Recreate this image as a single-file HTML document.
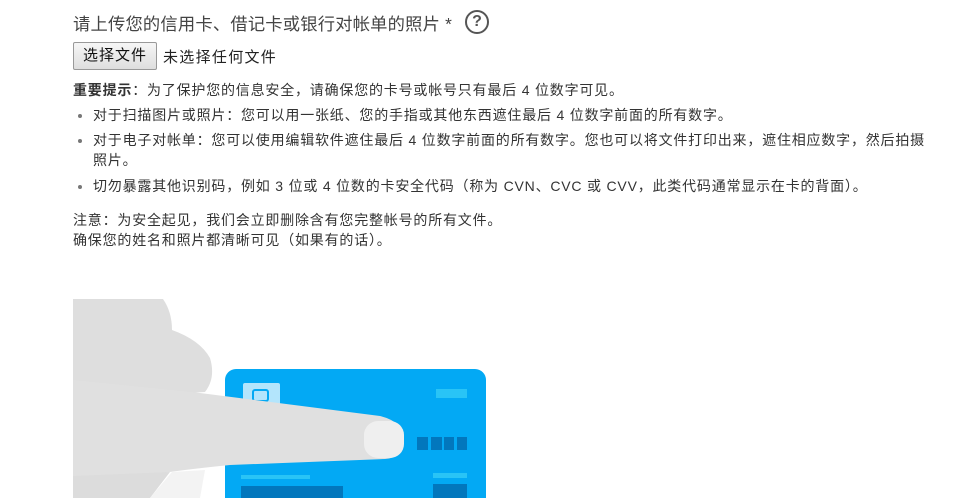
<!DOCTYPE html>
<html><head><meta charset="utf-8"><style>
html,body{margin:0;width:960px;height:498px;overflow:hidden;}
body{background:#fff;font-family:"Liberation Sans","Noto Sans CJK SC",sans-serif;color:#333;position:relative;}
.t{position:absolute;left:73px;top:10px;font-size:17.3px;color:#444;white-space:nowrap;letter-spacing:0.2px;}
.q{position:absolute;left:465px;top:10px;width:24px;height:24px;border:2.5px solid #555;border-radius:50%;box-sizing:border-box;font:bold 16px "Liberation Sans",sans-serif;color:#555;text-align:center;line-height:19px;}
.btn{position:absolute;left:73px;top:42px;width:84px;height:28px;box-sizing:border-box;border:1px solid #999;border-radius:2px;background:linear-gradient(#f6f6f6,#dedede);font-size:15px;color:#111;text-align:center;line-height:26px;letter-spacing:1px;}
.nf{position:absolute;left:163px;top:46px;font-size:15px;color:#222;letter-spacing:1.3px;}
.p,.b{position:absolute;font-size:14px;line-height:20px;white-space:nowrap;letter-spacing:0.8px;}
.p{left:73px}.b{left:93px}
.d{position:absolute;left:78px;width:4px;height:4px;border-radius:50%;background:#777;}
</style></head><body>
<div class="t">请上传您的信用卡、借记卡或银行对帐单的照片 *</div>
<div class="q">?</div>
<div class="btn">选择文件</div>
<div class="nf">未选择任何文件</div>
<div class="p" style="top:80px"><b>重要提示</b>：为了保护您的信息安全，请确保您的卡号或帐号只有最后 4 位数字可见。</div>
<div class="d" style="top:114px"></div>
<div class="b" style="top:105px">对于扫描图片或照片：您可以用一张纸、您的手指或其他东西遮住最后 4 位数字前面的所有数字。</div>
<div class="d" style="top:139px"></div>
<div class="b" style="top:130px">对于电子对帐单：您可以使用编辑软件遮住最后 4 位数字前面的所有数字。您也可以将文件打印出来，遮住相应数字，然后拍摄<br>照片。</div>
<div class="d" style="top:185px"></div>
<div class="b" style="top:176px">切勿暴露其他识别码，例如 3 位或 4 位数的卡安全代码（称为 CVN、CVC 或 CVV，此类代码通常显示在卡的背面）。</div>
<div class="p" style="top:210px">注意：为安全起见，我们会立即删除含有您完整帐号的所有文件。</div>
<div class="p" style="top:230px">确保您的姓名和照片都清晰可见（如果有的话）。</div>
<svg style="position:absolute;left:0;top:0" width="960" height="498">
<rect x="225" y="369" width="261" height="160" rx="11" fill="#03a9f4"/>
<rect x="243" y="383" width="37" height="25" rx="2" fill="#b3e5fc"/>
<rect x="253" y="390" width="15" height="11" rx="2" fill="none" stroke="#03a9f4" stroke-width="2"/>
<rect x="436" y="389" width="31" height="9" fill="#29c4f6"/>
<rect x="417" y="437" width="11" height="13" fill="#0277bd"/>
<rect x="431" y="437" width="11" height="13" fill="#0277bd"/>
<rect x="444" y="437" width="10" height="13" fill="#0277bd"/>
<rect x="457" y="437" width="10" height="13" fill="#0277bd"/>
<rect x="241" y="475" width="69" height="4" fill="#29c4f6"/>
<rect x="241" y="486" width="102" height="12" fill="#0277bd"/>
<rect x="433" y="473" width="34" height="5" fill="#29c4f6"/>
<rect x="433" y="484" width="34" height="14" fill="#0277bd"/>
<path d="M73 299 L163 299 Q172 312 172 330 Q200 340 210 358 Q216 378 205 392 L73 400 Z" fill="#dedede"/>
<path d="M73 380 L200 393 L380 416 Q405 422 404 442 Q402 458 385 459 L230 465 Q180 470 150 475 L73 478 Z" fill="#e0e0e0"/>
<path d="M73 476 L170 472 L150 498 L73 498 Z" fill="#dcdcdc"/>
<path d="M150 498 L172 472 L205 470 L200 498 Z" fill="#f3f3f3"/>
<rect x="364" y="421" width="40" height="37" rx="14" fill="#efefef"/>
</svg>
</body></html>
